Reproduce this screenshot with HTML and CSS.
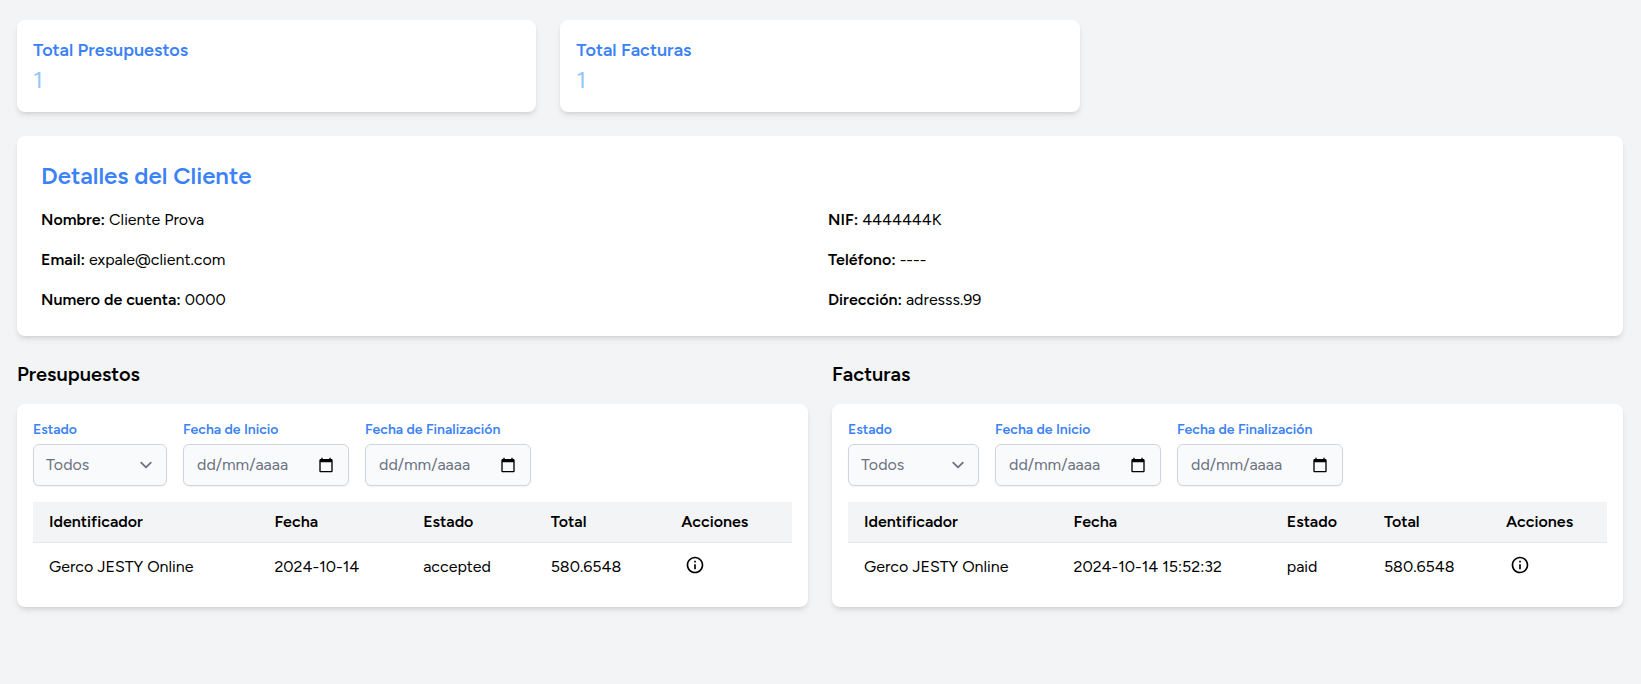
FILE: index.html
```html
<!DOCTYPE html>
<html lang="es">
<head>
<meta charset="utf-8">
<meta name="viewport" content="width=device-width, initial-scale=1">
<title>Detalles del Cliente</title>
<link rel="stylesheet" href="styles.css">
</head>
<body>
<main class="page">
  <section class="stats">
    <article class="card stat">
      <h3 class="stat-title">Total Presupuestos</h3>
      <p class="stat-value">1</p>
    </article>
    <article class="card stat">
      <h3 class="stat-title">Total Facturas</h3>
      <p class="stat-value">1</p>
    </article>
  </section>

  <section class="card details">
    <h2 class="details-title">Detalles del Cliente</h2>
    <div class="details-grid">
      <p><strong>Nombre:</strong> Cliente Prova</p>
      <p><strong>NIF:</strong> 4444444K</p>
      <p><strong>Email:</strong> expale@client.com</p>
      <p><strong>Teléfono:</strong> ----</p>
      <p><strong>Numero de cuenta:</strong> 0000</p>
      <p><strong>Dirección:</strong> adresss.99</p>
    </div>
  </section>

  <div class="columns">
    <section>
      <h2 class="section-title">Presupuestos</h2>
      <div class="card panel">
        <form class="filters">
          <div class="field">
            <label for="p-estado">Estado</label>
            <div class="control select-control budget-select">
              <select id="p-estado"><option>Todos</option></select>
              <svg class="chevron" viewBox="0 0 20 20" aria-hidden="true"><path d="M6 8l4 4 4-4"/></svg>
            </div>
          </div>
          <div class="field">
            <label for="p-inicio">Fecha de Inicio</label>
            <div class="control date-control">
              <input id="p-inicio" type="text" placeholder="dd/mm/aaaa">
              <button type="button" class="picker" aria-label="Abrir calendario"><svg viewBox="0 0 24 24"><path d="M20 3h-1V1h-2v2H7V1H5v2H4c-1.100 0-2 .9-2 2v16c0 1.100.9 2 2 2h16c1.100 0 2-.9 2-2V5c0-1.100-.9-2-2-2zm0 18H4V8h16v13z"/></svg></button>
            </div>
          </div>
          <div class="field">
            <label for="p-fin">Fecha de Finalización</label>
            <div class="control date-control">
              <input id="p-fin" type="text" placeholder="dd/mm/aaaa">
              <button type="button" class="picker" aria-label="Abrir calendario"><svg viewBox="0 0 24 24"><path d="M20 3h-1V1h-2v2H7V1H5v2H4c-1.100 0-2 .9-2 2v16c0 1.100.9 2 2 2h16c1.100 0 2-.9 2-2V5c0-1.100-.9-2-2-2zm0 18H4V8h16v13z"/></svg></button>
            </div>
          </div>
        </form>
        <table class="grid budgets">
          <thead>
            <tr><th>Identificador</th><th>Fecha</th><th>Estado</th><th>Total</th><th>Acciones</th></tr>
          </thead>
          <tbody>
            <tr>
              <td>Gerco JESTY Online</td><td>2024-10-14</td><td>accepted</td><td>580.6548</td>
              <td><a class="info" href="#" aria-label="Ver detalles"><svg viewBox="0 0 24 24"><path d="M11 7h2v2h-2zm0 4h2v6h-2zm1-9C6.480 2 2 6.480 2 12s4.480 10 10 10 10-4.480 10-10S17.520 2 12 2zm0 18c-4.410 0-8-3.590-8-8s3.590-8 8-8 8 3.590 8 8-3.590 8-8 8z"/></svg></a></td>
            </tr>
          </tbody>
        </table>
      </div>
    </section>

    <section>
      <h2 class="section-title">Facturas</h2>
      <div class="card panel">
        <form class="filters">
          <div class="field">
            <label for="f-estado">Estado</label>
            <div class="control select-control invoice-select">
              <select id="f-estado"><option>Todos</option></select>
              <svg class="chevron" viewBox="0 0 20 20" aria-hidden="true"><path d="M6 8l4 4 4-4"/></svg>
            </div>
          </div>
          <div class="field">
            <label for="f-inicio">Fecha de Inicio</label>
            <div class="control date-control">
              <input id="f-inicio" type="text" placeholder="dd/mm/aaaa">
              <button type="button" class="picker" aria-label="Abrir calendario"><svg viewBox="0 0 24 24"><path d="M20 3h-1V1h-2v2H7V1H5v2H4c-1.100 0-2 .9-2 2v16c0 1.100.9 2 2 2h16c1.100 0 2-.9 2-2V5c0-1.100-.9-2-2-2zm0 18H4V8h16v13z"/></svg></button>
            </div>
          </div>
          <div class="field">
            <label for="f-fin">Fecha de Finalización</label>
            <div class="control date-control">
              <input id="f-fin" type="text" placeholder="dd/mm/aaaa">
              <button type="button" class="picker" aria-label="Abrir calendario"><svg viewBox="0 0 24 24"><path d="M20 3h-1V1h-2v2H7V1H5v2H4c-1.100 0-2 .9-2 2v16c0 1.100.9 2 2 2h16c1.100 0 2-.9 2-2V5c0-1.100-.9-2-2-2zm0 18H4V8h16v13z"/></svg></button>
            </div>
          </div>
        </form>
        <table class="grid invoices">
          <thead>
            <tr><th>Identificador</th><th>Fecha</th><th>Estado</th><th>Total</th><th>Acciones</th></tr>
          </thead>
          <tbody>
            <tr>
              <td>Gerco JESTY Online</td><td>2024-10-14 15:52:32</td><td>paid</td><td>580.6548</td>
              <td><a class="info" href="#" aria-label="Ver detalles"><svg viewBox="0 0 24 24"><path d="M11 7h2v2h-2zm0 4h2v6h-2zm1-9C6.480 2 2 6.480 2 12s4.480 10 10 10 10-4.480 10-10S17.520 2 12 2zm0 18c-4.410 0-8-3.590-8-8s3.590-8 8-8 8 3.590 8 8-3.590 8-8 8z"/></svg></a></td>
            </tr>
          </tbody>
        </table>
      </div>
    </section>
  </div>
</main>
</body>
</html>
```

FILE: styles.css
```css
*, *::before, *::after { box-sizing: border-box; }
body {
  margin: 0;
  background: #f3f4f6;
  color: #000;
  font-family: Figtree, Lato, "Open Sans", sans-serif;
  font-size: 16px;
  line-height: 24px;
}
h2, h3, p { margin: 0; }
strong { font-weight: 600; }
input, select, button { font: inherit; color: inherit; }

.page {
  display: flex;
  flex-direction: column;
  gap: 24px;
  padding: 20px 18px 20px 17px;
}
.card {
  background: #fff;
  border-radius: 8px;
  box-shadow: 0 4px 6px -1px rgba(0, 0, 0, .1), 0 2px 4px -2px rgba(0, 0, 0, .1);
}

.stats { display: grid; grid-template-columns: repeat(3, 1fr); gap: 24px; }
.stat { padding: 16px; }
.stat-title { font-size: 18px; line-height: 28px; font-weight: 600; color: #3b82f6; }
.stat-value { font-size: 24px; line-height: 32px; color: #93c5fd; }

.details { padding: 24px; }
.details-title {
  margin-bottom: 16px;
  font-size: 24px;
  line-height: 32px;
  font-weight: 600;
  color: #3b82f6;
}
.details-grid { display: grid; grid-template-columns: 1fr 1fr; gap: 16px; }

.columns { display: grid; grid-template-columns: 1fr 1fr; gap: 24px; }
.section-title { margin-bottom: 16px; font-size: 20px; line-height: 28px; font-weight: 600; }
.panel { padding: 16px; }

.filters { display: flex; gap: 16px; margin-bottom: 16px; }
.field { display: flex; flex-direction: column; gap: 4px; }
.field label { font-size: 14px; line-height: 20px; font-weight: 600; color: #3b82f6; }
.control {
  display: flex;
  position: relative;
  height: 42px;
  background: #f9fafb;
  border: 1px solid #d1d5db;
  border-radius: 6px;
  box-shadow: 0 1px 2px rgba(0, 0, 0, .05);
  color: #6b7280;
}
.budget-select { width: 134px; }
.invoice-select { width: 131px; }
.select-control select {
  flex: 1;
  min-width: 0;
  padding: 0 36px 0 12px;
  appearance: none;
  border: 0;
  background: transparent;
}
.chevron {
  position: absolute;
  top: 8px;
  right: 8px;
  width: 24px;
  height: 24px;
  fill: none;
  stroke: #6b7280;
  stroke-width: 1.5;
  stroke-linecap: round;
  stroke-linejoin: round;
  pointer-events: none;
}
.date-control { width: 166px; align-items: center; padding: 0 12px 0 13px; }
.date-control input {
  flex: 1;
  min-width: 0;
  padding: 0;
  border: 0;
  background: transparent;
}
.date-control input::placeholder { color: #6b7280; opacity: 1; }
.picker { display: flex; padding: 2px; border: 0; background: none; }
.picker svg { width: 16px; height: 16px; fill: #000; }

.grid { width: 100%; table-layout: fixed; border-collapse: collapse; text-align: left; }
.grid th { height: 40px; padding: 8px 16px; background: #f3f4f6; border-bottom: 1px solid #e5e7eb; font-weight: 600; }
.grid td { height: 48px; padding: 8px 16px; white-space: nowrap; }
.budgets th:nth-child(1) { width: 29.7%; }
.budgets th:nth-child(2) { width: 19.6%; }
.budgets th:nth-child(3) { width: 16.8%; }
.budgets th:nth-child(4) { width: 17.2%; }
.invoices th:nth-child(1) { width: 27.6%; }
.invoices th:nth-child(2) { width: 28.1%; }
.invoices th:nth-child(3) { width: 12.8%; }
.invoices th:nth-child(4) { width: 16.1%; }
.info { display: flex; width: 28px; padding: 0 4px 4px; color: #000; }
.info svg { width: 20px; height: 20px; fill: currentColor; }
```
